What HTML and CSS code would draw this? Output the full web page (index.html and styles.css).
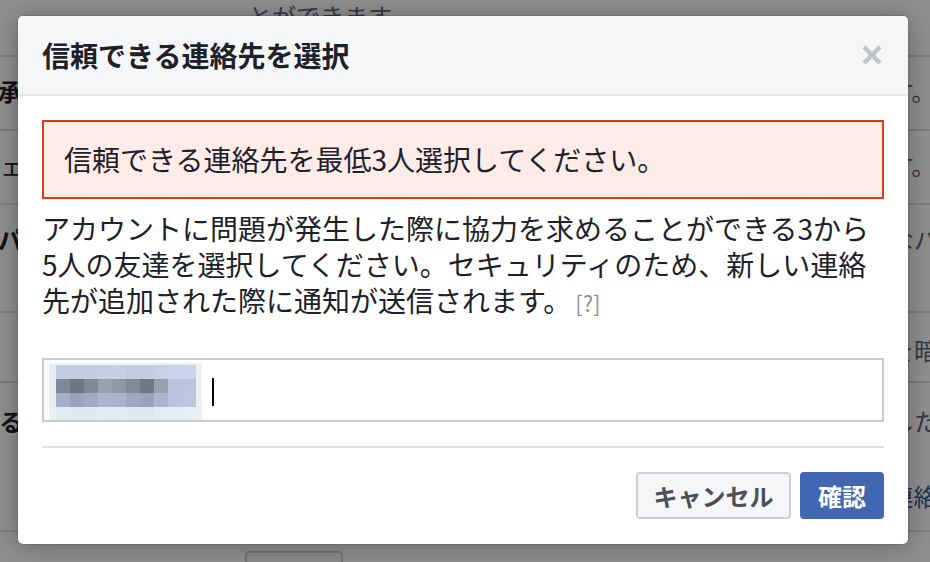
FILE: index.html
```html
<!DOCTYPE html>
<html lang="ja">
<head>
  <meta charset="UTF-8">
  <title>信頼できる連絡先を選択</title>
  <link rel="stylesheet" href="styles.css">
</head>
<body>

  <div class="page">
    <div class="row row-top">
      <div class="label"></div>
      <div class="mid"><p class="desc">とができます</p></div>
      <div class="val"></div>
    </div>
    <div class="row">
      <div class="label">承認済みのログイン</div>
      <div class="mid"></div>
      <div class="val">ログイン承認を有効にします。</div>
    </div>
    <div class="row">
      <div class="label label-shift">チェック</div>
      <div class="mid"></div>
      <div class="val">不明なログインを通知します。</div>
    </div>
    <div class="row row-tall">
      <div class="label">パスワード</div>
      <div class="mid"></div>
      <div class="val">アカウントを守るため安全なパスワード</div>
    </div>
    <div class="row row-low">
      <div class="label"></div>
      <div class="mid"></div>
      <div class="val">受信する全ての通知メールを暗号化する</div>
    </div>
    <div class="row row-big">
      <div class="label label-cut">ログインしている場所</div>
      <div class="mid"></div>
      <div class="val">
        <div>これまでにログインに使用した場所</div>
        <div class="val-link">アカウント用の信頼できる連絡先</div>
      </div>
    </div>
    <div class="row row-last">
      <div class="label"></div>
      <div class="mid"><span class="page-btn"></span></div>
      <div class="val"></div>
    </div>
  </div>

  <div class="overlay"></div>

  <div class="dialog">
    <div class="dialog-head">
      <h2 class="dialog-title">信頼できる連絡先を選択</h2>
      <svg class="close" width="20" height="20" viewBox="0 0 20 20">
        <line x1="2" y1="2" x2="18" y2="18" stroke="#bec2c9" stroke-width="4.4"/>
        <line x1="18" y1="2" x2="2" y2="18" stroke="#bec2c9" stroke-width="4.4"/>
      </svg>
    </div>

    <div class="dialog-body">
      <div class="error">信頼できる連絡先を最低3人選択してください。</div>

      <p class="intro">アカウントに問題が発生した際に協力を求めることができる3から5人の友達を選択してください。セキュリティのため、新しい連絡先が追加された際に通知が送信されます。<span class="help">[?]</span></p>

      <div class="picker">
        <svg class="token" width="153" height="57" viewBox="0 0 153 57" shape-rendering="crispEdges">
          <rect x="0" y="0" width="153" height="57" fill="#e6ebf2"/>
          <rect x="0" y="0" width="153" height="2" fill="#eef1f6"/>
          <rect x="0" y="44" width="7" height="13" fill="#eceff4"/>
          <rect x="147" y="2" width="6" height="55" fill="#eceef3"/>

          <rect x="7" y="2" width="14" height="14" fill="#c1cce3"/>
          <rect x="21" y="2" width="14" height="14" fill="#c4cee2"/>
          <rect x="35" y="2" width="14" height="14" fill="#c3cde1"/>
          <rect x="49" y="2" width="14" height="14" fill="#c5cfe3"/>
          <rect x="63" y="2" width="14" height="14" fill="#c6d0e4"/>
          <rect x="77" y="2" width="14" height="14" fill="#c2cce0"/>
          <rect x="91" y="2" width="14" height="14" fill="#c4cee2"/>
          <rect x="105" y="2" width="14" height="14" fill="#c6d1e5"/>
          <rect x="119" y="2" width="14" height="14" fill="#c8d3e8"/>
          <rect x="133" y="2" width="14" height="14" fill="#c9d4ea"/>

          <rect x="7" y="16" width="14" height="14" fill="#7f8899"/>
          <rect x="21" y="16" width="14" height="14" fill="#6e7585"/>
          <rect x="35" y="16" width="14" height="14" fill="#808999"/>
          <rect x="49" y="16" width="14" height="14" fill="#96a0b0"/>
          <rect x="63" y="16" width="14" height="14" fill="#8f98a8"/>
          <rect x="77" y="16" width="14" height="14" fill="#818a9a"/>
          <rect x="91" y="16" width="14" height="14" fill="#6f7686"/>
          <rect x="105" y="16" width="14" height="14" fill="#97a0b1"/>
          <rect x="119" y="16" width="14" height="14" fill="#b8c4dc"/>
          <rect x="133" y="16" width="14" height="14" fill="#b9c5de"/>

          <rect x="7" y="30" width="14" height="14" fill="#a3b0c8"/>
          <rect x="21" y="30" width="14" height="14" fill="#98a4bc"/>
          <rect x="35" y="30" width="14" height="14" fill="#9eaac2"/>
          <rect x="49" y="30" width="14" height="14" fill="#a9b5cc"/>
          <rect x="63" y="30" width="14" height="14" fill="#a8b4cb"/>
          <rect x="77" y="30" width="14" height="14" fill="#9ca8c0"/>
          <rect x="91" y="30" width="14" height="14" fill="#98a4bc"/>
          <rect x="105" y="30" width="14" height="14" fill="#aab6cd"/>
          <rect x="119" y="30" width="14" height="14" fill="#b8c4dc"/>
          <rect x="133" y="30" width="14" height="14" fill="#bbc7df"/>

          <rect x="7" y="44" width="14" height="13" fill="#e3e9f3"/>
          <rect x="21" y="44" width="14" height="13" fill="#e1e7f1"/>
          <rect x="35" y="44" width="14" height="13" fill="#e2e8f2"/>
          <rect x="49" y="44" width="14" height="13" fill="#e4eaf4"/>
          <rect x="63" y="44" width="14" height="13" fill="#e4eaf4"/>
          <rect x="77" y="44" width="14" height="13" fill="#e2e8f2"/>
          <rect x="91" y="44" width="14" height="13" fill="#e1e7f1"/>
          <rect x="105" y="44" width="14" height="13" fill="#e5ebf5"/>
          <rect x="119" y="44" width="14" height="13" fill="#e6ecf5"/>
          <rect x="133" y="44" width="14" height="13" fill="#e8edf6"/>
        </svg>
        <span class="caret"></span>
      </div>

      <div class="divider"></div>

      <div class="actions">
        <button class="btn btn-cancel">キャンセル</button>
        <button class="btn btn-confirm">確認</button>
      </div>
    </div>
  </div>

</body>
</html>
```

FILE: styles.css
```css
body {
  margin: 0;
  width: 930px;
  height: 562px;
  overflow: hidden;
  position: relative;
  background-color: #ffffff;
  font-family: 'Noto Sans CJK JP', sans-serif;
  color: #1d2129;
}

/* page behind the dialog */

.page {
  width: 930px;
}

.row {
  display: grid;
  grid-template-columns: 245px 357px 1fr;
  align-items: start;
  height: 72px;
  padding-top: 18px;
  box-sizing: border-box;
  border-bottom: 2px solid #dddfe2;
  font-size: 24px;
  line-height: 32px;
}

.row-top {
  height: 57px;
  padding-top: 0;
}

.row + .row {
  height: 74px;
}

.row.row-tall {
  height: 108px;
}

.row.row-low {
  height: 70px;
  padding-top: 21px;
}

.row.row-big {
  height: 149px;
  padding-top: 22px;
}

.row.row-last {
  height: 30px;
  padding-top: 19px;
  border-bottom: none;
}

.label {
  margin-left: -2px;
  font-weight: bold;
  white-space: nowrap;
}

.label-shift {
  margin-left: -24px;
  font-weight: normal;
}

.label-cut {
  margin-left: -168px;
}

.mid {
  min-width: 0;
}

.desc {
  margin: 0 0 0 3px;
  color: #606770;
}

.val {
  white-space: nowrap;
  overflow: hidden;
  color: #606770;
}

.val-link {
  margin-top: 43px;
  color: #385898;
}

.page-btn {
  display: block;
  width: 98px;
  height: 11px;
  box-sizing: border-box;
  border: 2px solid #ccd0d5;
  border-bottom: none;
  border-radius: 4px 4px 0 0;
  background-color: #f5f6f7;
}

.overlay {
  position: absolute;
  top: 0;
  left: 0;
  right: 0;
  bottom: 0;
  background-color: rgba(0, 0, 0, 0.44);
}

/* dialog */

.dialog {
  position: absolute;
  left: 18px;
  top: 16px;
  width: 890px;
  background-color: #fff;
  border-radius: 5px;
  overflow: hidden;
  box-shadow: 0 2px 26px rgba(0, 0, 0, 0.3), 0 0 0 1px rgba(0, 0, 0, 0.1);
}

.dialog-head {
  height: 78px;
  display: flex;
  align-items: center;
  justify-content: space-between;
  padding: 0 26px 0 24px;
  background-color: #f5f6f7;
  border-bottom: 2px solid #e5e5e5;
}

.dialog-title {
  margin: 0;
  font-size: 28px;
  font-weight: bold;
  line-height: 38px;
}

.close {
  display: block;
}

.dialog-body {
  padding: 24px 24px 25px;
}

.error {
  border: 2px solid #dd3c10;
  background-color: #ffebe8;
  padding: 20px;
  font-size: 28px;
  line-height: 35px;
}

.intro {
  margin: 11px 0 0;
  padding-right: 8px;
  font-size: 28px;
  line-height: 36px;
}

.help {
  margin-left: 4px;
  font-size: 22px;
  line-height: 20px;
  color: #90949c;
}

.picker {
  margin-top: 40px;
  height: 60px;
  border: 2px solid #cccccc;
  display: flex;
  align-items: flex-start;
}

.token {
  display: block;
  margin: 3px 0 0 5px;
}

.caret {
  width: 2px;
  height: 28px;
  background-color: #000;
  margin: 18px 0 0 10px;
}

.divider {
  margin-top: 24px;
  height: 2px;
  background-color: #dddfe2;
}

.actions {
  margin-top: 24px;
  display: flex;
  justify-content: flex-end;
  gap: 9px;
}

.btn {
  height: 47px;
  box-sizing: border-box;
  border: 2px solid;
  border-radius: 4px;
  padding: 0;
  font-family: 'Noto Sans CJK JP', sans-serif;
  font-size: 24px;
  font-weight: bold;
  line-height: 43px;
  text-align: center;
  cursor: pointer;
}

.btn-cancel {
  width: 155px;
  background-color: #f5f6f7;
  border-color: #ccd0d5;
  color: #4b4f56;
}

.btn-confirm {
  width: 84px;
  background-color: #4267b2;
  border-color: #4267b2;
  color: #fff;
}
```
